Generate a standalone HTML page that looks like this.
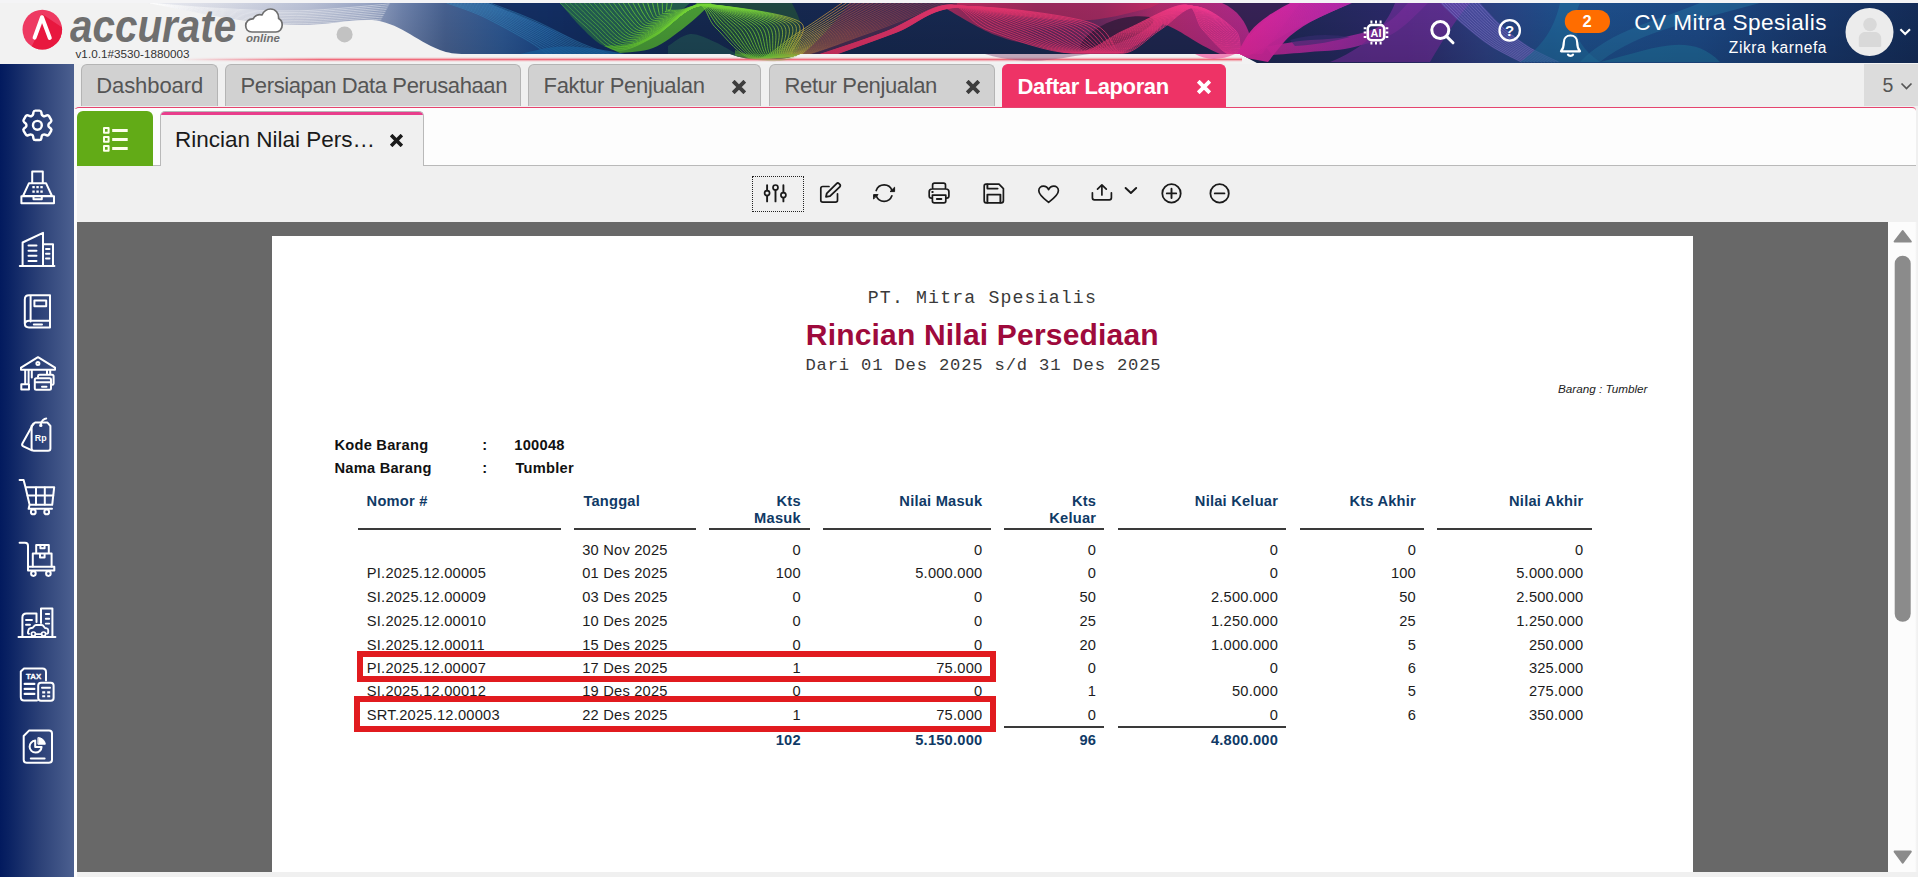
<!DOCTYPE html>
<html lang="id">
<head>
<meta charset="utf-8">
<title>Accurate Online - Rincian Nilai Persediaan</title>
<style>
*{box-sizing:border-box;margin:0;padding:0}
html,body{width:1918px;height:877px;overflow:hidden;background:#f0f0f0;font-family:"Liberation Sans",sans-serif;}
body{position:relative}
.abs{position:absolute}
/* header */
#hdr{position:absolute;left:0;top:0;width:1918px;height:64px;background:#f2f2f2;overflow:hidden}
#hdr svg.bg{position:absolute;left:0;top:0}
#logo-text{position:absolute;left:70px;top:-.5px;font-size:45.5px;font-weight:bold;font-style:italic;color:#6f6f6f;line-height:54px;transform-origin:0 0;transform:scaleX(.888);letter-spacing:0px;white-space:nowrap}
#online{position:absolute;left:246px;top:31px;font-size:11.5px;font-weight:bold;font-style:italic;color:#6f6f6f;line-height:14px;white-space:nowrap}
#ver{position:absolute;left:75.5px;top:47px;font-size:11.7px;color:#333;line-height:14px;white-space:nowrap;letter-spacing:.02px}
#company{position:absolute;right:91px;top:7.5px;font-size:22.6px;letter-spacing:.45px;color:#fff;line-height:30px;white-space:nowrap}
#user{position:absolute;right:91px;top:37.5px;font-size:15.6px;letter-spacing:.55px;color:#fff;line-height:20px;white-space:nowrap}
/* sidebar */
#side{position:absolute;left:0;top:64px;width:74px;height:813px;background:linear-gradient(90deg,#021a5e 0%,#0a2263 12%,#2d4278 55%,#4c6090 100%)}
#side svg{position:absolute;left:17px;width:40px;height:40px;fill:none;stroke:#fff;stroke-width:2;stroke-linecap:round;stroke-linejoin:round}
/* tabs row 1 */
#tabs{position:absolute;left:74px;top:64px;width:1844px;height:43px;background:#f0f0f0}
.tab{position:absolute;top:0;height:42px;background:#d1d1d1;border:1px solid #b4b4b4;border-bottom:none;border-radius:6px 6px 0 0;color:#555;font-size:22px;line-height:41px;white-space:nowrap}
.tab span{position:absolute;top:0}
.tab.act{background:#ee3366;border-color:#ee3366;color:#fff;font-weight:bold;height:43px;line-height:43px}
.x{position:absolute}
#tabcount{position:absolute;left:1864px;top:63.500px;width:54px;height:42px;background:#dcdcdc;color:#555;font-size:19.500px;line-height:43px}
/* row 2 */
#row2{position:absolute;left:74px;top:107px;width:1842px;height:59px;background:#fdfdfd;border-top:1px solid #e5446e;border-radius:5px 4px 0 0;border-bottom:1px solid #b9b9b9}
#gbtn{position:absolute;left:77.400px;top:111.300px;width:76px;height:54.700px;background:#62ab17;border-radius:6px 6px 0 0}
#rtab{position:absolute;left:160px;top:111px;width:264px;height:55px;background:#f0f0f0;border:1px solid #b9b9b9;border-bottom:none;border-radius:5px 5px 0 0;overflow:hidden}
#rtab:before{content:"";position:absolute;left:-1px;top:-1px;right:-1px;height:4px;background:#e83e8c}
#rtab span{position:absolute;left:14px;top:13.300px;font-size:22.5px;color:#1a1a1a;line-height:30px;white-space:nowrap}
/* toolbar */
#tool{position:absolute;left:77px;top:166px;width:1841px;height:56px;background:#f0f0f0}
#tool svg{position:absolute;top:15px;width:26px;height:26px;fill:none;stroke:#1a1a1a;stroke-width:1.7;stroke-linecap:round;stroke-linejoin:round}
/* viewer */
#view{position:absolute;left:77px;top:222px;width:1811px;height:650px;background:#686868;overflow:hidden}
#page{position:absolute;left:195px;top:14px;width:1421px;height:700px;background:#fff}
#sb{position:absolute;left:1888px;top:222px;width:30px;height:650px;background:linear-gradient(90deg,#fcfcfc 0,#fcfcfc 27px,#f1f1f1 29px)}
#bot{position:absolute;left:77px;top:872px;width:1841px;height:5px;background:#f0f0f0}
#gap{position:absolute;left:74px;top:109px;width:3.300px;height:768px;background:#fdfdfd}
/* report */
#page div{position:absolute;white-space:nowrap;line-height:16px}
.m{font-family:"Liberation Mono",monospace;color:#3a3a3a;font-size:18px}
.h{font-weight:bold;color:#103a66;font-size:14.67px;letter-spacing:.22px}
.b{font-weight:bold;color:#111;font-size:14.67px;letter-spacing:.25px}
.d{font-size:14.67px;color:#1c1c1c;letter-spacing:.22px}
.it{font-style:italic;font-size:11.7px;color:#1c1c1c}
.ttl{letter-spacing:.19px;font-weight:bold;font-size:30px;color:#9e0a3c;line-height:36px !important}
.ln{height:2px;background:#3a3a3a}
.rb{border:6px solid #e11b1f;background:#fff}
</style>
</head>
<body>
<div id="hdr">
<svg class="bg" width="1918" height="64" viewBox="0 0 1918 64"><defs>
<linearGradient id="bg" gradientUnits="userSpaceOnUse" x1="0" y1="0" x2="1918" y2="0">
<stop offset="0" stop-color="#f2f2f2"/><stop offset=".078" stop-color="#ebecf1"/><stop offset=".115" stop-color="#d6d9e4"/><stop offset=".16" stop-color="#b8bfd4"/><stop offset=".19" stop-color="#9aa6c4"/>
<stop offset=".21" stop-color="#6c80a9"/><stop offset=".232" stop-color="#46608f"/><stop offset=".262" stop-color="#2c5690"/>
<stop offset=".285" stop-color="#1a4585"/><stop offset=".305" stop-color="#122f63"/><stop offset=".36" stop-color="#14284f"/>
<stop offset=".65" stop-color="#1a2850"/><stop offset=".73" stop-color="#2b2868"/><stop offset=".775" stop-color="#2c3f80"/>
<stop offset=".815" stop-color="#1d4f8a"/><stop offset=".885" stop-color="#1c4884"/><stop offset=".94" stop-color="#18386c"/><stop offset="1" stop-color="#142c58"/>
</linearGradient>
<linearGradient id="gv" x1="0" y1="0" x2="0" y2="1"><stop offset="0" stop-color="#000" stop-opacity=".0"/><stop offset="1" stop-color="#000" stop-opacity=".12"/></linearGradient>
<linearGradient id="pk" gradientUnits="userSpaceOnUse" x1="940" y1="0" x2="1260" y2="0"><stop offset="0" stop-color="#c02a5e"/><stop offset=".3" stop-color="#6e2658"/><stop offset=".5" stop-color="#7a2860"/><stop offset=".68" stop-color="#d02a70"/><stop offset="1" stop-color="#d0289a"/></linearGradient>
<linearGradient id="mg" gradientUnits="userSpaceOnUse" x1="1240" y1="0" x2="1420" y2="0"><stop offset="0" stop-color="#e0269b"/><stop offset=".55" stop-color="#b428a8"/><stop offset="1" stop-color="#7a2c9c"/></linearGradient>
<linearGradient id="og" gradientUnits="userSpaceOnUse" x1="780" y1="0" x2="900" y2="0"><stop offset="0" stop-color="#c8a040"/><stop offset=".5" stop-color="#b85a38"/><stop offset="1" stop-color="#a03058" stop-opacity=".3"/></linearGradient>
<linearGradient id="gl" gradientUnits="userSpaceOnUse" x1="560" y1="0" x2="960" y2="0"><stop offset="0" stop-color="#3f9a4a"/><stop offset=".2" stop-color="#6fd432"/><stop offset=".52" stop-color="#7ad43a"/><stop offset=".6" stop-color="#c8b040"/><stop offset=".72" stop-color="#d07a48"/><stop offset="1" stop-color="#c04060" stop-opacity=".4"/></linearGradient>
<linearGradient id="pl" gradientUnits="userSpaceOnUse" x1="820" y1="0" x2="1400" y2="0"><stop offset="0" stop-color="#d23060"/><stop offset=".55" stop-color="#f03878"/><stop offset=".75" stop-color="#f038a0"/><stop offset="1" stop-color="#c030c0"/></linearGradient>
<clipPath id="bc"><path d="M0,3H1918V63H1257L1240,54H0Z"/></clipPath>
<clipPath id="bc2"><path d="M0,3H1918V63H1257L1240,54H800C780,62 750,62 730,54H0Z"/></clipPath>
</defs>
<g clip-path="url(#bc2)">
<rect x="0" y="3" width="1918" height="60" fill="url(#bg)"/>
<path d="M150.0,3.0C161.6,3.9 194.8,7.2 219.8,8.4C244.7,9.7 271.2,11.6 299.5,10.8C327.8,10.1 374.5,5.1 389.5,3.9M150.0,3.1C161.5,4.2 194.5,7.8 219.2,9.3C244.0,10.9 270.3,13.0 298.5,12.4C326.7,11.8 373.5,6.9 388.5,5.8M150.0,3.2C161.5,4.4 194.2,8.5 218.8,10.2C243.3,12.0 269.4,14.4 297.5,14.0C325.6,13.6 372.5,8.8 387.5,7.8M150.0,3.4C161.4,4.7 193.8,9.1 218.2,11.1C242.7,13.2 268.5,15.8 296.5,15.6C324.5,15.3 371.5,10.6 386.5,9.6M150.0,3.5C161.3,4.9 193.5,9.8 217.8,12.1C242.0,14.3 267.5,17.3 295.5,17.2C323.5,17.1 370.5,12.5 385.5,11.6M150.0,3.5C161.2,5.1 193.2,10.4 217.2,13.0C241.3,15.5 266.6,18.7 294.5,18.8C322.4,18.9 369.5,14.3 384.5,13.5M150.0,3.6C161.1,5.3 192.8,11.1 216.8,13.9C240.7,16.6 265.7,20.2 293.5,20.4C321.3,20.7 368.5,16.2 383.5,15.4M150.0,3.8C161.0,5.6 192.5,11.7 216.2,14.8C240.0,17.8 264.8,21.6 292.5,22.0C320.2,22.4 367.5,18.0 382.5,17.2M150.0,3.9C161.0,5.8 192.2,12.4 215.8,15.6C239.3,18.9 263.9,23.0 291.5,23.6C319.1,24.2 366.5,19.9 381.5,19.1M150.0,4.0C160.9,6.0 191.8,13.0 215.2,16.5C238.7,20.1 263.0,24.4 290.5,25.2C318.0,25.9 365.5,21.7 380.5,21.0" fill="none" stroke="#ffffff" stroke-opacity="0.5" stroke-width="0.9"/>
<path d="M488,3H640L600,54C580,40 530,20 488,3Z" fill="#122b5e" fill-opacity=".9"/>
<path d="M445.0,3.0C450.8,5.2 466.7,9.8 480.0,16.0C493.3,22.2 514.2,33.7 525.0,40.0C535.8,46.3 541.7,51.7 545.0,54.0L612.0,54.0C606.7,52.0 592.8,47.7 580.0,42.0C567.2,36.3 549.7,26.5 535.0,20.0C520.3,13.5 499.2,5.8 492.0,3.0Z" fill="#2270aa" fill-opacity="0.18" />
<path d="M446.7,3.0C452.6,5.2 468.6,10.0 482.0,16.1C495.3,22.3 516.1,33.8 527.0,40.1C537.9,46.4 544.0,51.7 547.4,54.0M450.0,3.0C456.0,5.2 472.4,10.2 485.9,16.4C499.4,22.6 519.8,34.0 530.9,40.2C541.9,46.5 548.6,51.7 552.2,54.0M453.4,3.0C459.5,5.3 476.2,10.5 489.8,16.7C503.4,22.9 523.6,34.1 534.8,40.4C546.0,46.6 553.3,51.7 557.0,54.0M456.8,3.0C462.9,5.3 480.1,10.8 493.8,17.0C507.4,23.2 527.4,34.3 538.8,40.5C550.1,46.7 557.9,51.8 561.8,54.0M460.1,3.0C466.4,5.4 483.9,11.0 497.7,17.3C511.4,23.6 531.2,34.5 542.7,40.6C554.2,46.8 562.6,51.8 566.5,54.0M463.5,3.0C469.8,5.4 487.8,11.3 501.6,17.6C515.5,23.9 535.0,34.7 546.6,40.8C558.2,46.9 567.2,51.8 571.3,54.0M466.8,3.0C473.3,5.5 491.6,11.5 505.5,17.9C519.5,24.2 538.8,34.9 550.5,40.9C562.3,47.0 571.8,51.8 576.1,54.0M470.2,3.0C476.7,5.5 495.4,11.8 509.5,18.1C523.5,24.5 542.6,35.1 554.5,41.1C566.4,47.0 576.5,51.8 580.9,54.0M473.5,3.0C480.2,5.6 499.2,12.1 513.4,18.4C527.5,24.8 546.3,35.3 558.4,41.2C570.4,47.1 581.1,51.9 585.7,54.0M476.9,3.0C483.6,5.6 503.1,12.3 517.3,18.7C531.6,25.1 550.1,35.5 562.3,41.4C574.5,47.2 585.8,51.9 590.5,54.0M480.2,3.0C487.1,5.7 506.9,12.6 521.2,19.0C535.6,25.4 553.9,35.7 566.2,41.5C578.6,47.3 590.4,51.9 595.2,54.0M483.6,3.0C490.5,5.7 510.8,12.8 525.2,19.3C539.6,25.7 557.7,35.9 570.2,41.6C582.7,47.4 595.1,51.9 600.0,54.0M487.0,3.0C494.0,5.8 514.6,13.1 529.1,19.6C543.6,26.0 561.5,36.0 574.1,41.8C586.7,47.5 599.7,52.0 604.8,54.0M490.3,3.0C497.4,5.8 518.4,13.4 533.0,19.9C547.7,26.3 565.3,36.2 578.0,41.9C590.8,47.6 604.3,52.0 609.6,54.0" fill="none" stroke="#48aede" stroke-opacity="0.42" stroke-width="0.7"/>
<path d="M520.0,54.0C525.8,52.8 543.3,48.0 555.0,47.0C566.7,46.0 578.3,46.8 590.0,48.0C601.7,49.2 619.2,53.0 625.0,54.0L625.0,56.0C619.2,56.0 601.7,56.0 590.0,56.0C578.3,56.0 566.7,56.0 555.0,56.0C543.3,56.0 525.8,56.0 520.0,56.0Z" fill="#1d68aa" fill-opacity="0.75" />
<path d="M560.0,3.0C563.3,6.8 573.3,19.2 580.0,26.0C586.7,32.8 593.7,40.0 600.0,44.0C606.3,48.0 615.0,49.0 618.0,50.0L650.0,40.0C653.0,37.3 663.0,28.7 668.0,24.0C673.0,19.3 676.3,15.5 680.0,12.0C683.7,8.5 688.3,4.5 690.0,3.0Z" fill="#2a704a" fill-opacity="0.7" />
<path d="M700.0,3.0C702.5,6.2 709.0,15.2 715.0,22.0C721.0,28.8 729.3,37.7 736.0,44.0C742.7,50.3 751.8,57.3 755.0,60.0L790.0,60.0C791.7,57.3 798.3,50.3 800.0,44.0C801.7,37.7 801.3,28.8 800.0,22.0C798.7,15.2 793.3,6.2 792.0,3.0Z" fill="#23523a" fill-opacity="0.7" />
<path d="M668.0,46.0C671.7,44.0 682.2,34.7 690.0,34.0C697.8,33.3 706.7,38.3 715.0,42.0C723.3,45.7 735.8,53.7 740.0,56.0L740.0,58.0C735.8,57.7 723.3,56.7 715.0,56.0C706.7,55.3 697.8,54.3 690.0,54.0C682.2,53.7 671.7,54.0 668.0,54.0Z" fill="#1f4d55" fill-opacity="0.8" />
<path d="M604.0,46.0C609.3,45.5 625.3,46.5 636.0,43.0C646.7,39.5 657.8,31.7 668.0,25.0C678.2,18.3 692.2,6.7 697.0,3.0L712.0,3.0C707.5,7.0 694.8,19.5 685.0,27.0C675.2,34.5 663.8,43.7 653.0,48.0C642.2,52.3 625.5,52.2 620.0,53.0Z" fill="#55b52e" fill-opacity="0.8" />
<path d="M735.0,50.0C737.8,51.0 745.3,54.3 752.0,56.0C758.7,57.7 767.0,60.3 775.0,60.0C783.0,59.7 795.8,55.0 800.0,54.0L800.0,62.0C795.8,62.0 783.0,62.0 775.0,62.0C767.0,62.0 758.7,62.0 752.0,62.0C745.3,62.0 737.8,62.0 735.0,62.0Z" fill="#62b834" fill-opacity="0.55" />
<path d="M560.0,3.0C564.2,6.8 575.7,18.2 585.0,26.0C594.3,33.8 604.3,48.3 616.0,50.0C627.7,51.7 641.5,43.5 655.0,36.0C668.5,28.5 686.8,6.3 697.0,5.0C707.2,3.7 706.5,19.0 716.0,28.0C725.5,37.0 740.7,58.0 754.0,59.0C767.3,60.0 781.3,43.3 796.0,34.0C810.7,24.7 834.3,8.2 842.0,3.0M564.9,3.0C568.8,6.7 579.8,17.8 588.7,25.3C597.6,32.8 607.0,46.7 618.3,48.3C629.5,49.9 642.8,42.1 656.1,34.9C669.3,27.7 687.1,6.2 697.7,5.0C708.3,3.8 710.0,18.8 719.7,27.7C729.3,36.7 742.5,57.8 755.7,58.9C769.0,59.9 783.9,43.3 799.0,34.0C814.2,24.7 838.6,8.2 846.5,3.0M569.7,3.0C573.5,6.6 583.9,17.4 592.4,24.6C600.9,31.9 609.7,45.0 620.5,46.5C631.3,48.0 644.2,40.7 657.2,33.7C670.2,26.8 687.4,6.0 698.4,5.0C709.4,4.0 713.5,18.5 723.3,27.5C733.2,36.4 744.3,57.7 757.5,58.7C770.6,59.8 786.5,43.3 802.1,34.0C817.7,24.7 842.8,8.2 851.0,3.0M574.6,3.0C578.2,6.5 588.1,16.9 596.1,23.9C604.1,30.9 612.4,43.3 622.8,44.8C633.1,46.2 645.5,39.2 658.3,32.6C671.0,26.0 687.6,5.9 699.1,5.0C710.5,4.1 716.9,18.3 727.0,27.2C737.0,36.2 746.2,57.5 759.2,58.6C772.2,59.7 789.1,43.3 805.1,34.0C821.2,24.7 847.1,8.2 855.4,3.0M579.5,3.0C582.9,6.4 592.2,16.5 599.8,23.2C607.4,29.9 615.1,41.7 625.0,43.0C635.0,44.4 646.9,37.8 659.3,31.5C671.8,25.1 687.9,5.8 699.8,5.0C711.7,4.2 720.4,18.0 730.6,27.0C740.8,35.9 748.0,57.3 761.0,58.5C773.9,59.7 791.7,43.2 808.2,34.0C824.7,24.8 851.3,8.2 859.9,3.0M584.3,3.0C587.5,6.3 596.3,16.1 603.5,22.5C610.6,28.9 617.8,40.0 627.3,41.3C636.8,42.6 648.2,36.4 660.4,30.3C672.6,24.3 688.2,5.6 700.5,5.0C712.8,4.4 723.9,17.8 734.3,26.7C744.6,35.6 749.9,57.1 762.7,58.3C775.5,59.6 794.3,43.2 811.2,34.0C828.2,24.8 855.5,8.2 864.4,3.0M589.2,3.0C592.2,6.1 600.4,15.7 607.2,21.8C613.9,27.9 620.5,38.3 629.6,39.6C638.6,40.8 649.6,35.0 661.5,29.2C673.5,23.5 688.4,5.5 701.2,5.0C713.9,4.5 727.4,17.6 737.9,26.4C748.5,35.3 751.7,57.0 764.4,58.2C777.2,59.5 796.9,43.2 814.3,34.0C831.7,24.8 859.8,8.2 868.9,3.0M594.1,3.0C596.9,6.0 604.6,15.3 610.9,21.1C617.2,26.9 623.2,36.7 631.8,37.8C640.4,39.0 650.9,33.6 662.6,28.1C674.3,22.6 688.7,5.3 701.9,5.0C715.0,4.7 730.8,17.3 741.6,26.2C752.3,35.0 753.6,56.8 766.2,58.1C778.8,59.4 799.4,43.2 817.3,34.0C835.2,24.8 864.0,8.2 873.3,3.0M599.0,3.0C601.6,5.9 608.7,14.9 614.6,20.4C620.4,25.9 625.9,35.0 634.1,36.1C642.3,37.2 652.3,32.1 663.7,27.0C675.1,21.8 689.0,5.2 702.6,5.0C716.2,4.8 734.3,17.1 745.2,25.9C756.1,34.7 755.4,56.6 767.9,58.0C780.4,59.3 802.0,43.2 820.3,34.0C838.7,24.8 868.2,8.2 877.8,3.0M603.8,3.0C606.2,5.8 612.8,14.5 618.3,19.7C623.7,25.0 628.6,33.3 636.3,34.3C644.1,35.4 653.6,30.7 664.8,25.8C675.9,20.9 689.2,5.0 703.3,5.0C717.3,5.0 737.8,16.8 748.9,25.7C759.9,34.5 757.2,56.4 769.7,57.8C782.1,59.2 804.6,43.1 823.4,34.0C842.2,24.9 872.5,8.2 882.3,3.0M608.7,3.0C610.9,5.7 617.0,14.1 622.0,19.0C626.9,24.0 631.3,31.7 638.6,32.6C645.9,33.6 655.0,29.3 665.9,24.7C676.8,20.1 689.5,4.9 704.0,5.0C718.4,5.1 741.3,16.6 752.5,25.4C763.8,34.2 759.1,56.3 771.4,57.7C783.7,59.1 807.2,43.1 826.4,34.0C845.7,24.9 876.7,8.2 886.8,3.0M613.6,3.0C615.6,5.6 621.1,13.7 625.7,18.3C630.2,23.0 634.0,30.0 640.9,30.9C647.8,31.7 656.3,27.9 667.0,23.6C677.6,19.3 689.8,4.7 704.7,5.0C719.5,5.3 744.8,16.4 756.2,25.1C767.6,33.9 760.9,56.1 773.1,57.6C785.3,59.0 809.8,43.1 829.5,34.0C849.2,24.9 881.0,8.2 891.3,3.0M618.4,3.0C620.3,5.4 625.2,13.3 629.3,17.7C633.5,22.0 636.7,28.3 643.1,29.1C649.6,29.9 657.7,26.5 668.0,22.4C678.4,18.4 690.1,4.6 705.3,5.0C720.6,5.4 748.2,16.1 759.8,24.9C771.4,33.6 762.8,55.9 774.9,57.4C787.0,59.0 812.4,43.1 832.5,34.0C852.7,24.9 885.2,8.2 895.7,3.0M623.3,3.0C624.9,5.3 629.4,12.9 633.0,17.0C636.7,21.0 639.4,26.7 645.4,27.4C651.4,28.1 659.0,25.0 669.1,21.3C679.2,17.6 690.3,4.4 706.0,5.0C721.8,5.6 751.7,15.9 763.5,24.6C775.2,33.3 764.6,55.7 776.6,57.3C788.6,58.9 815.0,43.1 835.6,34.0C856.2,24.9 889.4,8.2 900.2,3.0M628.2,3.0C629.6,5.2 633.5,12.5 636.7,16.3C640.0,20.0 642.1,25.0 647.7,25.7C653.2,26.3 660.4,23.6 670.2,20.2C680.1,16.7 690.6,4.3 706.7,5.0C722.9,5.7 755.2,15.7 767.1,24.3C779.1,33.0 766.4,55.6 778.3,57.2C790.3,58.8 817.6,43.0 838.6,34.0C859.7,25.0 893.7,8.2 904.7,3.0M633.0,3.0C634.3,5.1 637.6,12.1 640.4,15.6C643.2,19.1 644.8,23.3 649.9,23.9C655.1,24.5 661.7,22.2 671.3,19.0C680.9,15.9 690.9,4.2 707.4,5.0C724.0,5.8 758.7,15.4 770.8,24.1C782.9,32.8 768.3,55.4 780.1,57.0C791.9,58.7 820.1,43.0 841.7,34.0C863.2,25.0 897.9,8.2 909.2,3.0M637.9,3.0C638.9,5.0 641.8,11.7 644.1,14.9C646.5,18.1 647.5,21.7 652.2,22.2C656.9,22.7 663.1,20.8 672.4,17.9C681.7,15.1 691.1,4.0 708.1,5.0C725.1,6.0 762.2,15.2 774.4,23.8C786.7,32.5 770.1,55.2 781.8,56.9C793.5,58.6 822.7,43.0 844.7,34.0C866.7,25.0 902.2,8.2 913.7,3.0M642.8,3.0C643.6,4.9 645.9,11.3 647.8,14.2C649.8,17.1 650.2,20.0 654.4,20.4C658.7,20.9 664.4,19.4 673.5,16.8C682.5,14.2 691.4,3.9 708.8,5.0C726.3,6.1 765.6,14.9 778.1,23.6C790.5,32.2 772.0,55.0 783.6,56.8C795.2,58.5 825.3,43.0 847.7,34.0C870.2,25.0 906.4,8.2 918.1,3.0M647.7,3.0C648.3,4.7 650.0,10.9 651.5,13.5C653.0,16.1 652.9,18.3 656.7,18.7C660.5,19.1 665.8,17.9 674.6,15.7C683.4,13.4 691.7,3.7 709.5,5.0C727.4,6.3 769.1,14.7 781.7,23.3C794.4,31.9 773.8,54.9 785.3,56.7C796.8,58.4 827.9,42.9 850.8,34.0C873.7,25.1 910.6,8.2 922.6,3.0M652.5,3.0C653.0,4.6 654.1,10.5 655.2,12.8C656.3,15.1 655.6,16.7 659.0,17.0C662.4,17.2 667.1,16.5 675.7,14.5C684.2,12.5 691.9,3.6 710.2,5.0C728.5,6.4 772.6,14.5 785.4,23.0C798.2,31.6 775.6,54.7 787.0,56.5C798.4,58.3 830.5,42.9 853.8,34.0C877.2,25.1 914.9,8.2 927.1,3.0M657.4,3.0C657.6,4.5 658.3,10.1 658.9,12.1C659.6,14.1 658.2,15.0 661.2,15.2C664.2,15.4 668.5,15.1 676.7,13.4C685.0,11.7 692.2,3.4 710.9,5.0C729.6,6.6 776.1,14.2 789.0,22.8C802.0,31.3 777.5,54.5 788.8,56.4C800.1,58.3 833.1,42.9 856.9,34.0C880.7,25.1 919.1,8.2 931.6,3.0M662.3,3.0C662.3,4.4 662.4,9.6 662.6,11.4C662.8,13.1 660.9,13.3 663.5,13.5C666.0,13.6 669.8,13.7 677.8,12.3C685.8,10.8 692.5,3.3 711.6,5.0C730.8,6.7 779.5,14.0 792.7,22.5C805.8,31.1 779.3,54.3 790.5,56.3C801.7,58.2 835.7,42.9 859.9,34.0C884.2,25.1 923.4,8.2 936.0,3.0M667.1,3.0C667.0,4.3 666.5,9.2 666.3,10.7C666.1,12.2 663.6,11.7 665.7,11.7C667.8,11.8 671.2,12.3 678.9,11.1C686.7,10.0 692.7,3.1 712.3,5.0C731.9,6.9 783.0,13.7 796.3,22.3C809.7,30.8 781.2,54.2 792.3,56.1C803.4,58.1 838.2,42.9 863.0,34.0C887.7,25.1 927.6,8.2 940.5,3.0M672.0,3.0C671.7,4.2 670.7,8.8 670.0,10.0C669.3,11.2 666.3,10.0 668.0,10.0C669.7,10.0 672.5,10.8 680.0,10.0C687.5,9.2 693.0,3.0 713.0,5.0C733.0,7.0 786.5,13.5 800.0,22.0C813.5,30.5 783.0,54.0 794.0,56.0C805.0,58.0 840.8,42.8 866.0,34.0C891.2,25.2 931.8,8.2 945.0,3.0" fill="none" stroke="url(#gl)" stroke-opacity="0.85" stroke-width="0.9"/>
<path d="M850,3H957C925,14 895,30 860,44C845,50 830,54 800,56C820,40 835,22 850,3Z" fill="#6a3052" fill-opacity=".55"/>
<path d="M945.0,6.0C947.5,5.5 950.8,3.5 960.0,3.0C969.2,2.5 976.7,3.0 1000.0,3.0C1023.3,3.0 1070.0,3.0 1100.0,3.0C1130.0,3.0 1155.0,3.0 1180.0,3.0C1205.0,3.0 1230.0,3.0 1250.0,3.0C1270.0,3.0 1291.7,3.0 1300.0,3.0L1262.0,54.0C1260.0,54.0 1263.7,54.0 1250.0,54.0C1236.3,54.0 1208.3,54.0 1180.0,54.0C1151.7,54.0 1102.5,55.0 1080.0,54.0C1057.5,53.0 1059.2,51.2 1045.0,48.0C1030.8,44.8 1011.7,41.7 995.0,35.0C978.3,28.3 953.3,12.5 945.0,8.0Z" fill="url(#pk)" fill-opacity="0.8" />
<path d="M957.0,3.0C967.5,3.0 997.8,3.0 1020.0,3.0C1042.2,3.0 1066.7,3.0 1090.0,3.0C1113.3,3.0 1148.3,3.0 1160.0,3.0L1150.0,8.0C1140.0,10.0 1111.7,18.7 1090.0,20.0C1068.3,21.3 1042.2,18.5 1020.0,16.0C997.8,13.5 967.5,6.8 957.0,5.0Z" fill="#d02a5e" fill-opacity="0.5" />
<path d="M1082,42C1095,24 1125,13 1150,17C1156,19 1154,24 1146,29C1130,40 1105,50 1084,51C1079,49 1079,46 1082,42Z" fill="#3a1c40" fill-opacity=".9"/>
<path d="M1163,24C1178,28 1196,44 1220,54L1118,54C1135,48 1150,38 1163,24Z" fill="#18264e" fill-opacity=".96"/>
<path d="M1222,3H1292C1276,10 1262,20 1250,36C1246,22 1238,10 1222,3Z" fill="#2b2250" fill-opacity=".92"/>
<path d="M818.0,55.0C829.2,51.2 863.3,40.3 885.0,32.0C906.7,23.7 930.8,5.3 948.0,5.0C965.2,4.7 967.3,22.0 988.0,30.0C1008.7,38.0 1049.2,53.0 1072.0,53.0C1094.8,53.0 1106.3,38.0 1125.0,30.0C1143.7,22.0 1171.0,5.0 1184.0,5.0C1197.0,5.0 1195.0,21.7 1203.0,30.0C1211.0,38.3 1223.2,55.0 1232.0,55.0C1240.8,55.0 1246.0,38.7 1256.0,30.0C1266.0,21.3 1286.0,7.5 1292.0,3.0M818.8,55.0C829.9,51.2 863.9,40.3 885.6,32.0C907.2,23.7 930.7,5.5 948.6,5.1C966.4,4.7 971.8,21.6 992.8,29.6C1013.7,37.6 1052.1,52.9 1074.4,53.0C1096.7,53.1 1108.3,38.0 1126.7,30.0C1145.0,22.0 1171.6,5.1 1184.6,5.1C1197.5,5.1 1196.5,21.7 1204.5,30.0C1212.5,38.3 1223.8,55.0 1232.7,55.0C1241.5,55.0 1247.4,38.7 1257.7,30.0C1268.1,21.3 1288.6,7.5 1294.8,3.0M819.5,55.0C830.6,51.2 864.5,40.3 886.1,32.0C907.7,23.7 930.6,5.7 949.1,5.2C967.7,4.7 976.3,21.3 997.5,29.2C1018.8,37.2 1055.0,52.9 1076.8,53.0C1098.6,53.1 1110.3,38.0 1128.3,30.0C1146.4,22.0 1172.2,5.2 1185.1,5.2C1198.1,5.2 1198.0,21.7 1206.0,30.0C1214.1,38.3 1224.4,55.0 1233.3,55.0C1242.2,55.0 1248.7,38.7 1259.4,30.0C1270.1,21.3 1291.2,7.5 1297.5,3.0M820.3,55.0C831.4,51.2 865.1,40.3 886.7,32.0C908.3,23.7 930.5,5.8 949.7,5.3C969.0,4.8 980.7,20.9 1002.3,28.9C1023.9,36.8 1057.9,52.8 1079.1,53.0C1100.4,53.2 1112.2,38.0 1130.0,30.0C1147.8,22.0 1172.8,5.3 1185.7,5.3C1198.6,5.3 1199.5,21.7 1207.6,30.0C1215.6,38.3 1225.1,55.0 1234.0,55.0C1242.9,55.0 1250.1,38.7 1261.1,30.0C1272.2,21.3 1293.8,7.5 1300.3,3.0M821.0,55.0C832.1,51.2 865.7,40.3 887.3,32.0C908.8,23.7 930.3,6.0 950.3,5.4C970.2,4.8 985.2,20.5 1007.0,28.5C1028.9,36.4 1060.8,52.7 1081.5,53.0C1102.3,53.3 1114.2,37.9 1131.7,30.0C1149.1,22.1 1173.4,5.4 1186.3,5.4C1199.2,5.4 1201.0,21.7 1209.1,30.0C1217.2,38.3 1225.7,55.0 1234.7,55.0C1243.6,55.0 1251.5,38.7 1262.9,30.0C1274.3,21.3 1296.3,7.5 1303.0,3.0M821.8,55.0C832.8,51.2 866.3,40.3 887.9,32.0C909.4,23.7 930.2,6.1 950.9,5.5C971.5,4.8 989.6,20.2 1011.8,28.1C1034.0,36.0 1063.7,52.7 1083.9,53.0C1104.2,53.3 1116.2,37.9 1133.3,30.0C1150.5,22.1 1174.0,5.5 1186.9,5.5C1199.7,5.5 1202.5,21.7 1210.6,30.0C1218.7,38.3 1226.3,55.0 1235.3,55.0C1244.3,55.0 1252.8,38.7 1264.6,30.0C1276.3,21.3 1298.9,7.5 1305.8,3.0M822.6,55.0C833.5,51.2 867.0,40.2 888.4,32.0C909.9,23.8 930.1,6.3 951.4,5.6C972.8,4.9 994.1,19.8 1016.6,27.7C1039.0,35.6 1066.5,52.6 1086.3,53.0C1106.0,53.4 1118.1,37.9 1135.0,30.0C1151.9,22.1 1174.6,5.6 1187.4,5.6C1200.3,5.6 1204.0,21.8 1212.1,30.0C1220.2,38.2 1227.0,55.0 1236.0,55.0C1245.0,55.0 1254.2,38.7 1266.3,30.0C1278.4,21.3 1301.5,7.5 1308.6,3.0M823.3,55.0C834.3,51.2 867.6,40.2 889.0,32.0C910.4,23.8 929.9,6.4 952.0,5.7C974.1,4.9 998.6,19.4 1021.3,27.3C1044.1,35.2 1069.4,52.6 1088.7,53.0C1107.9,53.4 1120.1,37.9 1136.7,30.0C1153.2,22.1 1175.2,5.7 1188.0,5.7C1200.8,5.7 1205.6,21.8 1213.7,30.0C1221.8,38.2 1227.6,55.0 1236.7,55.0C1245.7,55.0 1255.6,38.7 1268.0,30.0C1280.4,21.3 1304.1,7.5 1311.3,3.0M824.1,55.0C835.0,51.2 868.2,40.2 889.6,32.0C911.0,23.8 929.8,6.6 952.6,5.8C975.3,4.9 1003.0,19.1 1026.1,27.0C1049.2,34.8 1072.3,52.5 1091.0,53.0C1109.8,53.5 1122.1,37.9 1138.3,30.0C1154.6,22.1 1175.8,5.8 1188.6,5.8C1201.4,5.8 1207.1,21.8 1215.2,30.0C1223.3,38.2 1228.2,55.0 1237.3,55.0C1246.4,55.0 1256.9,38.7 1269.7,30.0C1282.5,21.3 1306.7,7.5 1314.1,3.0M824.9,55.0C835.7,51.2 868.8,40.2 890.1,32.0C911.5,23.8 929.7,6.8 953.1,5.9C976.6,5.0 1007.5,18.7 1030.9,26.6C1054.2,34.4 1075.2,52.4 1093.4,53.0C1111.6,53.6 1124.0,37.9 1140.0,30.0C1156.0,22.1 1176.4,5.9 1189.1,5.9C1201.9,5.9 1208.6,21.8 1216.7,30.0C1224.9,38.2 1228.9,55.0 1238.0,55.0C1247.1,55.0 1258.3,38.7 1271.4,30.0C1284.6,21.3 1309.3,7.5 1316.9,3.0M825.6,55.0C836.5,51.2 869.4,40.2 890.7,32.0C912.1,23.8 929.6,6.9 953.7,6.0C977.9,5.0 1011.9,18.3 1035.6,26.2C1059.3,34.0 1078.1,52.4 1095.8,53.0C1113.5,53.6 1126.0,37.8 1141.7,30.0C1157.3,22.2 1177.0,6.0 1189.7,6.0C1202.5,6.0 1210.1,21.8 1218.2,30.0C1226.4,38.2 1229.5,55.0 1238.7,55.0C1247.8,55.0 1259.7,38.7 1273.1,30.0C1286.6,21.3 1311.9,7.5 1319.6,3.0M826.4,55.0C837.2,51.2 870.0,40.2 891.3,32.0C912.6,23.8 929.4,7.1 954.3,6.0C979.1,5.0 1016.4,18.0 1040.4,25.8C1064.4,33.6 1081.0,52.3 1098.2,53.0C1115.3,53.7 1128.0,37.8 1143.3,30.0C1158.7,22.2 1177.5,6.0 1190.3,6.0C1203.0,6.0 1211.6,21.8 1219.8,30.0C1227.9,38.2 1230.2,55.0 1239.3,55.0C1248.5,55.0 1261.0,38.7 1274.9,30.0C1288.7,21.3 1314.5,7.5 1322.4,3.0M827.1,55.0C837.9,51.2 870.6,40.1 891.9,32.0C913.1,23.9 929.3,7.2 954.9,6.1C980.4,5.0 1020.9,17.6 1045.1,25.4C1069.4,33.2 1083.9,52.2 1100.6,53.0C1117.2,53.8 1130.0,37.8 1145.0,30.0C1160.0,22.2 1178.1,6.1 1190.9,6.1C1203.6,6.1 1213.1,21.9 1221.3,30.0C1229.5,38.1 1230.8,55.0 1240.0,55.0C1249.2,55.0 1262.4,38.7 1276.6,30.0C1290.8,21.3 1317.0,7.5 1325.1,3.0M827.9,55.0C838.7,51.2 871.2,40.1 892.4,32.0C913.7,23.9 929.2,7.4 955.4,6.2C981.7,5.1 1025.3,17.3 1049.9,25.0C1074.5,32.8 1086.8,52.2 1103.0,53.0C1119.1,53.8 1131.9,37.8 1146.7,30.0C1161.4,22.2 1178.7,6.2 1191.4,6.2C1204.1,6.2 1214.6,21.9 1222.8,30.0C1231.0,38.1 1231.4,55.0 1240.7,55.0C1249.9,55.0 1263.7,38.7 1278.3,30.0C1292.8,21.3 1319.6,7.5 1327.9,3.0M828.7,55.0C839.4,51.2 871.8,40.1 893.0,32.0C914.2,23.9 929.1,7.6 956.0,6.3C982.9,5.1 1029.8,16.9 1054.7,24.7C1079.6,32.4 1089.7,52.1 1105.3,53.0C1120.9,53.9 1133.9,37.8 1148.3,30.0C1162.8,22.2 1179.3,6.3 1192.0,6.3C1204.7,6.3 1216.1,21.9 1224.3,30.0C1232.6,38.1 1232.1,55.0 1241.3,55.0C1250.6,55.0 1265.1,38.7 1280.0,30.0C1294.9,21.3 1322.2,7.5 1330.7,3.0M829.4,55.0C840.1,51.2 872.4,40.1 893.6,32.0C914.8,23.9 928.9,7.7 956.6,6.4C984.2,5.1 1034.2,16.5 1059.4,24.3C1084.6,32.0 1092.6,52.0 1107.7,53.0C1122.8,54.0 1135.9,37.8 1150.0,30.0C1164.1,22.2 1179.9,6.4 1192.6,6.4C1205.2,6.4 1217.6,21.9 1225.9,30.0C1234.1,38.1 1232.7,55.0 1242.0,55.0C1251.3,55.0 1266.5,38.7 1281.7,30.0C1297.0,21.3 1324.8,7.5 1333.4,3.0M830.2,55.0C840.8,51.2 873.0,40.1 894.1,32.0C915.3,23.9 928.8,7.9 957.1,6.5C985.5,5.2 1038.7,16.2 1064.2,23.9C1089.7,31.7 1095.5,52.0 1110.1,53.0C1124.7,54.0 1137.8,37.7 1151.7,30.0C1165.5,22.3 1180.5,6.5 1193.1,6.5C1205.8,6.5 1219.1,21.9 1227.4,30.0C1235.6,38.1 1233.3,55.0 1242.7,55.0C1252.0,55.0 1267.8,38.7 1283.4,30.0C1299.0,21.3 1327.4,7.5 1336.2,3.0M831.0,55.0C841.6,51.2 873.6,40.1 894.7,32.0C915.8,23.9 928.7,8.0 957.7,6.6C986.8,5.2 1043.2,15.8 1069.0,23.5C1094.7,31.3 1098.4,51.9 1112.5,53.0C1126.5,54.1 1139.8,37.7 1153.3,30.0C1166.9,22.3 1181.1,6.6 1193.7,6.6C1206.3,6.6 1220.6,21.9 1228.9,30.0C1237.2,38.1 1234.0,55.0 1243.3,55.0C1252.7,55.0 1269.2,38.7 1285.1,30.0C1301.1,21.3 1330.0,7.5 1339.0,3.0M831.7,55.0C842.3,51.2 874.2,40.0 895.3,32.0C916.4,24.0 928.5,8.2 958.3,6.7C988.0,5.2 1047.6,15.4 1073.7,23.1C1099.8,30.9 1101.3,51.9 1114.9,53.0C1128.4,54.1 1141.8,37.7 1155.0,30.0C1168.2,22.3 1181.7,6.7 1194.3,6.7C1206.9,6.7 1222.1,22.0 1230.4,30.0C1238.7,38.0 1234.6,55.0 1244.0,55.0C1253.4,55.0 1270.6,38.7 1286.9,30.0C1303.1,21.3 1332.6,7.5 1341.7,3.0M832.5,55.0C843.0,51.2 874.8,40.0 895.9,32.0C916.9,24.0 928.4,8.3 958.9,6.8C989.3,5.3 1052.1,15.1 1078.5,22.8C1104.9,30.5 1104.2,51.8 1117.2,53.0C1130.3,54.2 1143.7,37.7 1156.7,30.0C1169.6,22.3 1182.3,6.8 1194.9,6.8C1207.4,6.8 1223.7,22.0 1232.0,30.0C1240.3,38.0 1235.2,55.0 1244.7,55.0C1254.1,55.0 1271.9,38.7 1288.6,30.0C1305.2,21.3 1335.2,7.5 1344.5,3.0M833.2,55.0C843.8,51.2 875.4,40.0 896.4,32.0C917.5,24.0 928.3,8.5 959.4,6.9C990.6,5.3 1056.5,14.7 1083.2,22.4C1109.9,30.1 1107.1,51.7 1119.6,53.0C1132.1,54.3 1145.7,37.7 1158.3,30.0C1171.0,22.3 1182.9,6.9 1195.4,6.9C1208.0,6.9 1225.2,22.0 1233.5,30.0C1241.8,38.0 1235.9,55.0 1245.3,55.0C1254.8,55.0 1273.3,38.7 1290.3,30.0C1307.3,21.3 1337.7,7.5 1347.2,3.0M834.0,55.0C844.5,51.2 876.0,40.0 897.0,32.0C918.0,24.0 928.2,8.7 960.0,7.0C991.8,5.3 1061.0,14.3 1088.0,22.0C1115.0,29.7 1110.0,51.7 1122.0,53.0C1134.0,54.3 1147.7,37.7 1160.0,30.0C1172.3,22.3 1183.5,7.0 1196.0,7.0C1208.5,7.0 1226.7,22.0 1235.0,30.0C1243.3,38.0 1236.5,55.0 1246.0,55.0C1255.5,55.0 1274.7,38.7 1292.0,30.0C1309.3,21.3 1340.3,7.5 1350.0,3.0" fill="none" stroke="url(#pl)" stroke-opacity="0.8" stroke-width="1"/>
<path d="M1290.0,3.0C1286.3,5.2 1274.7,11.2 1268.0,16.0C1261.3,20.8 1255.3,25.3 1250.0,32.0C1244.7,38.7 1238.3,52.0 1236.0,56.0L1268.0,62.0C1271.7,57.7 1281.7,43.3 1290.0,36.0C1298.3,28.7 1307.7,23.5 1318.0,18.0C1328.3,12.5 1346.3,5.5 1352.0,3.0Z" fill="url(#mg)" fill-opacity="0.95" />
<path d="M1266.0,47.0C1271.7,46.0 1286.8,42.7 1300.0,41.0C1313.2,39.3 1330.8,39.8 1345.0,37.0C1359.2,34.2 1374.5,29.7 1385.0,24.0C1395.5,18.3 1404.2,6.5 1408.0,3.0L1428.0,3.0C1422.3,8.0 1407.0,25.5 1394.0,33.0C1381.0,40.5 1364.0,44.8 1350.0,48.0C1336.0,51.2 1323.0,50.8 1310.0,52.0C1297.0,53.2 1278.3,54.5 1272.0,55.0Z" fill="url(#mg)" fill-opacity="0.8" />
<path d="M1290,40C1310,34 1330,34 1350,37C1335,41 1315,45 1295,46Z" fill="#3a2f78" fill-opacity=".6"/>
<path d="M1395,3H1470C1455,20 1440,45 1430,62H1330C1360,50 1385,30 1395,3Z" fill="#6b2d96" fill-opacity=".75"/>
<path d="M1440.0,3.0C1443.7,6.5 1453.7,16.8 1462.0,24.0C1470.3,31.2 1480.3,39.7 1490.0,46.0C1499.7,52.3 1515.0,59.3 1520.0,62.0L1560.0,62.0C1554.7,59.3 1538.0,52.3 1528.0,46.0C1518.0,39.7 1508.0,31.2 1500.0,24.0C1492.0,16.8 1483.3,6.5 1480.0,3.0Z" fill="#5a55b0" fill-opacity="0.6" />
<path d="M1441.7,3.0C1445.3,6.5 1455.3,16.8 1463.6,24.0C1471.9,31.2 1481.9,39.7 1491.6,46.0C1501.3,52.3 1516.7,59.3 1521.7,62.0M1445.0,3.0C1448.6,6.5 1458.5,16.8 1466.8,24.0C1475.0,31.2 1485.0,39.7 1494.8,46.0C1504.5,52.3 1520.0,59.3 1525.0,62.0M1448.3,3.0C1451.9,6.5 1461.7,16.8 1469.9,24.0C1478.2,31.2 1488.2,39.7 1497.9,46.0C1507.7,52.3 1523.3,59.3 1528.3,62.0M1451.7,3.0C1455.2,6.5 1464.8,16.8 1473.1,24.0C1481.3,31.2 1491.3,39.7 1501.1,46.0C1510.8,52.3 1526.6,59.3 1531.7,62.0M1455.0,3.0C1458.5,6.5 1468.0,16.8 1476.2,24.0C1484.5,31.2 1494.5,39.7 1504.2,46.0C1514.0,52.3 1529.9,59.3 1535.0,62.0M1458.3,3.0C1461.8,6.5 1471.2,16.8 1479.4,24.0C1487.6,31.2 1497.6,39.7 1507.4,46.0C1517.2,52.3 1533.2,59.3 1538.3,62.0M1461.7,3.0C1465.2,6.5 1474.4,16.8 1482.6,24.0C1490.7,31.2 1500.7,39.7 1510.6,46.0C1520.4,52.3 1536.5,59.3 1541.7,62.0M1465.0,3.0C1468.5,6.5 1477.6,16.8 1485.8,24.0C1493.9,31.2 1503.9,39.7 1513.8,46.0C1523.6,52.3 1539.8,59.3 1545.0,62.0M1468.3,3.0C1471.8,6.5 1480.8,16.8 1488.9,24.0C1497.0,31.2 1507.0,39.7 1516.9,46.0C1526.8,52.3 1543.1,59.3 1548.3,62.0M1471.7,3.0C1475.1,6.5 1484.0,16.8 1492.1,24.0C1500.2,31.2 1510.2,39.7 1520.1,46.0C1530.0,52.3 1546.4,59.3 1551.7,62.0M1475.0,3.0C1478.4,6.5 1487.2,16.8 1495.2,24.0C1503.3,31.2 1513.3,39.7 1523.2,46.0C1533.2,52.3 1549.7,59.3 1555.0,62.0M1478.3,3.0C1481.7,6.5 1490.4,16.8 1498.4,24.0C1506.4,31.2 1516.4,39.7 1526.4,46.0C1536.4,52.3 1553.0,59.3 1558.3,62.0" fill="none" stroke="#a99be8" stroke-opacity="0.45" stroke-width="0.7"/>
<path d="M1560,3C1555,25 1545,45 1520,62H1600C1575,45 1570,25 1580,3Z" fill="#1f6c9c" fill-opacity=".6"/>
<path d="M1600,62C1640,30 1700,20 1760,3H1700C1660,20 1610,30 1580,62Z" fill="#2577a5" fill-opacity=".45"/>
<path d="M1600,62C1650,50 1690,30 1720,62Z" fill="#1f7aa0" fill-opacity=".5"/>
<rect x="0" y="3" width="1918" height="60" fill="url(#gv)"/>
</g>
<path d="M0,3H148C200,13 250,25 300,25C330,25 350,19 372,20C398,22 415,40 440,50C448,53 455,54 465,54L465,64H0Z" fill="#f2f2f2"/>
<rect x="0" y="0" width="1918" height="3" fill="#f4f4f6"/>
<defs><linearGradient id="rl" gradientUnits="userSpaceOnUse" x1="180" y1="0" x2="320" y2="0"><stop offset="0" stop-color="#f06a7a" stop-opacity="0"/><stop offset="1" stop-color="#f06a7a"/></linearGradient></defs>
<rect x="180" y="57.5" width="1062" height="4" fill="url(#rl)" opacity=".25"/>
<rect x="180" y="58.7" width="1062" height="1.6" fill="url(#rl)"/>
<path d="M733,54C745,58 760,62 780,61C790,60 796,57 800,54Z" fill="#62b834" fill-opacity=".3"/>
<path d="M985,54C1010,62 1040,63 1075,56L1090,54Z" fill="#8a5a80" fill-opacity=".5"/>
<path d="M1195,54C1205,60 1220,61 1235,54Z" fill="#ef5aa0" fill-opacity=".7"/>
<circle cx="344.6" cy="34.4" r="8" fill="#c2c2c2"/></svg>
<svg style="position:absolute;left:0;top:0" width="300" height="64" viewBox="0 0 300 64">
<defs><clipPath id="lc"><circle cx="42.3" cy="29.6" r="19.8"/></clipPath></defs>
<circle cx="42.3" cy="29.6" r="19.8" fill="#ee3a62"/>
<g clip-path="url(#lc)"><path d="M42,14L66,30L52,56L30,50L42,25Z" fill="#e8183f"/><path d="M22,36L40,56L20,56Z" fill="#f04a6e" opacity=".6"/></g>
<path d="M34.6,37.6L42,17.2L49.8,38" fill="none" stroke="#fff" stroke-width="4" stroke-linecap="round" stroke-linejoin="round"/>
<path d="M252,32C247.500,32 245.700,28.500 245.700,25.500C245.700,21.500 249,18.500 253.200,18.800C254.800,15.500 258.500,13.800 262,15C263.800,11 267,9 270.500,9C275.500,9 279,13 278.600,18.600C281,19.800 282.200,22.500 282.200,25C282.200,29 279.500,32 276,32Z" fill="#fff" stroke="#6e6e6e" stroke-width="1.7" stroke-linejoin="round"/>
</svg>

<div id="logo-text">accurate</div>
<div id="online">online</div>
<div id="ver">v1.0.1#3530-1880003</div>
<div id="company">CV Mitra Spesialis</div>
<div id="user">Zikra karnefa</div>
<svg style="position:absolute;left:1340px;top:0" width="578" height="64" viewBox="1340 0 578 64" fill="none" stroke="#fff" stroke-linecap="round" stroke-linejoin="round">
<rect x="1367.800" y="25" width="16.400" height="15.200" rx="3.800" stroke-width="2.600"/>
<path d="M1371.400,20.600V23.500M1376,20.600V23.500M1380.600,20.600V23.500M1371.400,41.700V44.600M1376,41.700V44.600M1380.600,41.700V44.600M1363.700,28.200H1366.400M1363.700,32.600H1366.400M1363.700,37H1366.400M1385.600,28.200H1388.300M1385.600,32.600H1388.300M1385.600,37H1388.300" stroke-width="2" stroke-linecap="butt"/>
<text x="1376" y="36.500" text-anchor="middle" font-family="Liberation Sans,sans-serif" font-weight="bold" font-size="10.800" fill="#fff" stroke="none">AI</text>
<circle cx="1440.300" cy="30.100" r="8.500" stroke-width="3"/><path d="M1446.800,36.600L1453,42.800" stroke-width="3"/>
<circle cx="1509.700" cy="30.400" r="10.200" stroke-width="2.300"/>
<text x="1509.700" y="35.700" text-anchor="middle" font-family="Liberation Sans,sans-serif" font-weight="bold" font-size="15" fill="#fff" stroke="none">?</text>
<path d="M1561,51.300H1580C1577.500,48.500 1577.200,45.500 1577.200,42.500C1577.200,38.500 1574.500,35.500 1570.500,35.500C1566.500,35.500 1563.800,38.500 1563.800,42.500C1563.800,45.500 1563.500,48.500 1561,51.300Z" stroke-width="2.200"/>
<path d="M1568,54.600C1569,56.200 1572,56.200 1573,54.600" stroke-width="2.200"/>
<rect x="1564.800" y="9.900" width="45.200" height="23" rx="11.500" fill="#ff6d00" stroke="none"/>
<text x="1587" y="27.200" text-anchor="middle" font-family="Liberation Sans,sans-serif" font-weight="bold" font-size="16.500" fill="#fff" stroke="none">2</text>
<circle cx="1869.500" cy="32" r="24" fill="#ececec" stroke="none"/>
<circle cx="1870" cy="24.500" r="6.800" fill="#d9d9d9" stroke="none"/>
<path d="M1858.800,45.500V38.500C1858.800,34.500 1862,32 1865,32H1875C1878,32 1881.200,34.500 1881.200,38.500V45.500C1881.200,46.500 1880.500,47 1879.500,47H1860.500C1859.500,47 1858.800,46.500 1858.800,45.500Z" fill="#d9d9d9" stroke="none"/>
<path d="M1900.400,29.200L1905.200,34L1910,29.200" stroke-width="2.100" stroke-linecap="butt" stroke-linejoin="miter"/>
</svg>

</div>
<div id="side"><svg style="position:absolute;left:0;top:0;width:74px;height:813px" viewBox="0 64 74 813" fill="none" stroke="#fff" stroke-width="2.500" stroke-linecap="round" stroke-linejoin="round">
<g transform="translate(17.840,105.740) scale(1.630)" stroke-width="1.500"><path d="M9.594 3.940c.09-.542.560-.940 1.110-.940h2.593c.550 0 1.020.398 1.110.940l.213 1.281c.063.374.313.686.645.870.074.040.147.083.220.127.325.196.720.257 1.075.124l1.217-.456a1.125 1.125 0 0 1 1.370.490l1.296 2.247a1.125 1.125 0 0 1-.260 1.431l-1.003.827c-.293.241-.438.613-.430.992a7.723 7.723 0 0 1 0 .255c-.008.378.137.750.430.991l1.004.827c.424.350.534.955.260 1.430l-1.298 2.247a1.125 1.125 0 0 1-1.369.491l-1.217-.456c-.355-.133-.750-.072-1.076.124a6.470 6.470 0 0 1-.220.128c-.331.183-.581.495-.644.869l-.213 1.281c-.09.543-.560.940-1.110.940h-2.594c-.550 0-1.019-.398-1.110-.940l-.213-1.281c-.062-.374-.312-.686-.644-.870a6.520 6.520 0 0 1-.220-.127c-.325-.196-.720-.257-1.076-.124l-1.217.456a1.125 1.125 0 0 1-1.369-.490l-1.297-2.247a1.125 1.125 0 0 1 .260-1.431l1.004-.827c.292-.240.437-.613.430-.991a6.932 6.932 0 0 1 0-.255c.007-.380-.138-.751-.430-.992l-1.004-.827a1.125 1.125 0 0 1-.260-1.430l1.297-2.247a1.125 1.125 0 0 1 1.370-.491l1.216.456c.356.133.751.072 1.076-.124.072-.044.146-.086.220-.128.332-.183.582-.495.644-.869l.214-1.280Z"/><circle cx="12" cy="12" r="2.700"/></g>
<!-- cash register -->
<path d="M32.200,183V171.600H42.800V183M29,183.200H46L52,196H23ZM21.400,196.200H54V203.200H21.400ZM33.500,196.500V199.300H41.800V196.500"/>
<path d="M33.500,187.200h.1M37.500,187.200h.1M41.500,187.200h.1M33.500,191.600h.1M37.500,191.600h.1M41.500,191.600h.1" stroke-width="2.300" stroke-linecap="square"/>
<!-- building -->
<path d="M19.800,266H54.400M22.600,265.500V242.500L43,232.800V265.500M43.400,244.300H53V265.500" />
<path d="M28.500,245.600H36.500M28.500,250.700H36.500M28.500,255.800H36.500M28.500,261H36.500M46,249H49.500M46,253.700H49.500M46,258.400H49.500"/>
<!-- book -->
<path d="M50,295.300H29C26.200,295.300 24.800,297 24.800,299.500V323.500C24.800,326 26.500,327.400 29,327.400H50ZM30.600,295.500V321.500M25,323.300C25.500,321.300 27,320.700 29,320.700H49.500M34.400,300.600H46.200V306.200H34.400ZM33.800,324.600H42"/>
<!-- bank -->
<path d="M21,367.600L38,357.200L55,367.600V369.800H21ZM25.200,370.500V383M28.600,370.500V383M21.300,384.200H29V389.600H21.300ZM31.800,370.500V377.500M47,370.500V374M50.200,370.500V374"/>
<circle cx="37.900" cy="363.600" r="1.500"/>
<path d="M38,377V376.200C38,375.300 38.600,374.800 39.500,374.800H52C53,374.800 53.600,375.400 53.600,376.300V383.500C53.600,384.300 53,384.800 52.200,384.800"/>
<rect x="34.800" y="378.200" width="16.200" height="11.600" rx="1.500"/>
<path d="M35,382.300H50.800M42,386.800H46.500"/>
<!-- Rp tag -->
<path d="M35,422.600H47.500L50.400,426V448.500C50.400,450 49.500,450.800 48,450.800H34C32.500,450.800 31.600,450 31.600,448.500V426Z"/>
<path d="M33.500,423.500L22.400,443.500C21.800,444.800 22.200,445.800 23.400,446.400L31.400,450.200"/>
<path d="M40.800,425C40.500,421 44.500,418.500 46.300,418.500" stroke-width="1.800"/>
<circle cx="40.800" cy="425.400" r=".9" stroke-width="1.600"/>
<text x="40.700" y="440.700" text-anchor="middle" font-family="Liberation Sans,sans-serif" font-weight="bold" font-size="8.800" fill="#fff" stroke="none">Rp</text>
<!-- cart -->
<path d="M19.600,480H23.600L25.500,487.200H54.200L52.200,504.800H29.600L25.500,487.200M29.600,504.800L28.600,508.800H52"/>
<path d="M36,487.500V504.500M44.800,487.500V504.500M27.600,495.600H53.200" stroke-width="2"/>
<circle cx="33.300" cy="511.900" r="2.400"/><circle cx="46.700" cy="511.900" r="2.400"/>
<!-- trolley -->
<path d="M19.600,542.800H25C27,542.800 28,543.800 28,545.800V566.800H54.300V570.400H28V566.800"/>
<path d="M36.200,553.400V545H48.800V553.400M32.800,566.500V553.600H51.600V566.500M40.400,545.200V548.200H44.600V545.200M40,553.800V557.600H44.600V553.800"/>
<circle cx="33.400" cy="573.600" r="2.300"/><circle cx="48.400" cy="573.600" r="2.300"/>
<!-- building car -->
<path d="M18.500,637H55.400M22.400,636.500V617.500C22.400,615 24,613.600 26.500,613.600H36.500V622M41,623V608.600H52.400V636.500"/>
<path d="M26,620H32M26,624.800H30M45.800,614H49.200M45.800,618.800H49.200M45.800,623.600H49.200" stroke-width="1.900"/>
<path d="M29,633.800C28,633.800 27.800,633 28,632L28.600,629.500C28.900,628.500 29.500,628.400 30.400,628.200L32.600,627.800L34.600,625.600C35,625.200 35.500,625 36.200,625H41.500C42.200,625 42.700,625.200 43.100,625.700L45,628L46.800,628.400C47.800,628.600 48.200,629.200 48.200,630.200V632.600C48.200,633.400 47.800,633.800 47,633.800" stroke-width="1.900"/>
<circle cx="33.400" cy="634" r="2" fill="#1f3570" stroke-width="1.700"/><circle cx="43.600" cy="634" r="2" fill="#1f3570" stroke-width="1.700"/><path d="M35.800,634.200H41.200" stroke-width="1.800"/>
<!-- tax -->
<path d="M37,700.400H24C22,700.400 20.800,699.200 20.800,697.200V671.500L24,668.500H42.500C44.800,668.500 46,669.900 46,672.100V680.400"/>
<text x="33.600" y="679.200" text-anchor="middle" font-family="Liberation Sans,sans-serif" font-weight="bold" font-size="7.800" fill="#fff" stroke="#fff" stroke-width=".35">TAX</text>
<path d="M24.600,683.900H34.400M24.600,688.900H34.400M24.600,693.900H34.400" stroke-width="2.100"/>
<rect x="38.200" y="682.800" width="15.400" height="18" rx="2.800"/>
<path d="M42,687.800H50" stroke-width="2"/><path d="M42.200,692.400H45.200M47.200,692.400H50.200M42.200,696.300H45.200M47.200,696.300H50.200" stroke-width="2.100" stroke-linecap="butt"/>
<!-- report -->
<path d="M29,730.600H49C51,730.600 52,731.800 52,733.600V759.800C52,761.600 51,762.800 49,762.800H26.600C24.800,762.800 23.700,761.600 23.700,759.800V736Z"/>
<path d="M35.200,740.600A6,6 0 1 0 41.600,746.900H35.200Z" stroke-width="2"/><path d="M38.300,737.600A7,7 0 0 1 45.300,744.200H38.300Z" fill="#fff" stroke-width="1"/>
<path d="M30.800,758.600H44.600" stroke-width="2"/>
</svg>
</div>
<div id="tabs">
<div class="tab" style="left:7px;width:137px"><span style="left:14.300px;letter-spacing:-.1px">Dashboard</span></div>
<div class="tab" style="left:151px;width:296px"><span style="left:14.600px;letter-spacing:-.4px">Persiapan Data Perusahaan</span></div>
<div class="tab" style="left:454px;width:233px"><span style="left:14.600px;letter-spacing:-.33px">Faktur Penjualan</span><svg class="x" style="left:203.2px;top:14.6px;width:14px;height:14px" viewBox="0 0 14 14"><path d="M1.200,1.200L12.800,12.800M12.800,1.200L1.200,12.800" stroke="#3d3d3d" stroke-width="3.900" stroke-linecap="butt" fill="none"/></svg></div>
<div class="tab" style="left:695px;width:226px"><span style="left:14.600px;letter-spacing:-.36px">Retur Penjualan</span><svg class="x" style="left:195.5px;top:14.599999999999994px;width:14px;height:14px" viewBox="0 0 14 14"><path d="M1.200,1.200L12.800,12.800M12.800,1.200L1.200,12.800" stroke="#3d3d3d" stroke-width="3.900" stroke-linecap="butt" fill="none"/></svg></div>
<div class="tab act" style="left:928px;width:224px"><span style="left:14.600px;letter-spacing:-.38px">Daftar Laporan</span><svg class="x" style="left:193.5px;top:15px;width:14px;height:14px" viewBox="0 0 14 14"><path d="M1.200,1.200L12.800,12.800M12.800,1.200L1.200,12.800" stroke="#fff" stroke-width="3.900" stroke-linecap="butt" fill="none"/></svg></div>
</div>
<div id="tabcount"><span style="position:absolute;left:18.500px">5</span><svg style="position:absolute;left:35.500px;top:18px" width="13" height="9" viewBox="0 0 13 9"><path d="M1.500,1.500L6.500,6.500L11.500,1.500" fill="none" stroke="#555" stroke-width="1.700"/></svg></div>
<div id="row2"></div>
<div id="gbtn"><svg style="position:absolute;left:0;top:0" width="76" height="55" viewBox="77.400 111 76 55" fill="none" stroke="#fdffec"><path d="M112.600,130.400H128.100M112.600,139.400H128.100M112.600,148.400H128.100" stroke-width="3"/><path d="M104.400,128.100h4.600v4.600h-4.600ZM104.400,137.100h4.600v4.600h-4.600ZM104.400,146.100h4.600v4.600h-4.600Z" stroke-width="2" stroke-linejoin="round"/></svg></div>
<div id="rtab"><span>Rincian Nilai Pers…</span><svg class="x" style="left:229.2px;top:21.80000000000001px;width:13px;height:13px" viewBox="0 0 14 14"><path d="M1.200,1.200L12.800,12.800M12.800,1.200L1.200,12.800" stroke="#1a1a1a" stroke-width="3.900" stroke-linecap="butt" fill="none"/></svg></div>
<div id="tool"><div style="position:absolute;left:675px;top:10px;width:52px;height:36px;border:1px dotted #222"></div>
<svg style="position:absolute;left:0;top:0;width:1841px;height:56px" viewBox="77 166 1841 56" fill="none" stroke="#141414" stroke-width="2" stroke-linecap="round" stroke-linejoin="round">
<path d="M767.100,185.200V190.400M767.100,195.800V201.400M775.500,190.200V201.400M783.400,185.200V192.300M783.400,197.900V201.400" stroke-width="1.900"/>
<circle cx="767.100" cy="193.100" r="2.500" stroke-width="1.700"/><circle cx="775.500" cy="187.500" r="2.500" stroke-width="1.700"/><circle cx="783.400" cy="195.100" r="2.500" stroke-width="1.700"/>
<!-- edit -->
<path d="M829,186.500H822.800C821.500,186.500 820.800,187.300 820.800,188.500V200.300C820.800,201.500 821.500,202.200 822.800,202.200H835.500C836.800,202.200 837.500,201.500 837.500,200.300V193.800"/>
<path d="M826,196.800L826.800,193.300L836.600,183.600C837.300,182.900 838.300,182.900 839,183.600L839.800,184.400C840.500,185.100 840.500,186.100 839.800,186.800L830,196.200Z" stroke-width="1.800"/>
<!-- refresh -->
<path d="M876.200,190.500C877.500,186.800 880.800,184.900 884.200,184.900C887.800,184.900 890.800,187.200 892,190.500M891.900,195.800C890.600,199.400 887.500,201.300 884.100,201.300C880.600,201.300 877.500,199.200 876.200,195.800"/>
<path d="M890.400,191.600H894.600V187.600ZM877.800,194.600H873.600V198.600Z" fill="#141414" stroke-width="1"/>
<!-- printer -->
<path d="M932.600,189V185C932.600,183.800 933.400,183.200 934.500,183.200H943.600C944.800,183.200 945.500,183.800 945.500,185V189M932.400,198.200H931.400C930,198.200 929.200,197.400 929.200,196V191.800C929.200,190 930.300,189 932,189H946C947.800,189 948.900,190 948.900,191.800V196C948.900,197.400 948,198.200 946.700,198.200H945.800M932.400,195.200H945.800V201C945.800,202.200 945,202.800 943.900,202.800H934.300C933.100,202.800 932.400,202.200 932.400,201Z"/>
<path d="M936.800,199H941.400" stroke-width="1.800"/><path d="M932.200,192H932.800" stroke-width="1.800"/>
<!-- save -->
<path d="M986,184.200H999L1003.400,188.600V200.800C1003.400,202 1002.600,202.800 1001.400,202.800H986C984.800,202.800 984.200,202 984.200,200.800V186C984.200,184.800 984.800,184.200 986,184.200Z"/>
<path d="M987.400,184.400V188.600H997.600M987.400,202.600V194.600H1000.400V202.600" stroke-width="1.900"/>
<!-- heart -->
<path d="M1048.600,202.400C1043,198.200 1038.800,194.800 1038.800,190.800C1038.800,188 1041,186.200 1043.400,186.200C1045.600,186.200 1047.600,187.400 1048.600,189.600C1049.600,187.400 1051.600,186.200 1053.800,186.200C1056.200,186.200 1058.400,188 1058.400,190.800C1058.400,194.800 1054.200,198.200 1048.600,202.400Z"/>
<!-- share -->
<path d="M1092.400,192.800V197.800C1092.400,199.200 1093.200,199.800 1094.400,199.800H1109.400C1110.600,199.800 1111.400,199.200 1111.400,197.800V192.800M1101.900,195V185M1097.500,189.200L1101.900,184.800L1106.300,189.200"/>
<path d="M1125.600,188L1130.900,193L1136.200,188" stroke-width="1.900"/>
<!-- plus / minus -->
<circle cx="1171.500" cy="193.400" r="9.200" stroke-width="1.800"/><path d="M1166.800,193.400H1176.200M1171.500,188.700V198.100" stroke-width="1.900"/>
<circle cx="1219.600" cy="193.400" r="9.200" stroke-width="1.800"/><path d="M1214.800,193.400H1224.400" stroke-width="1.900"/>
</svg>
</div>
<div id="view">
<div id="page"><div class="m" style="left:0;width:1421px;text-align:center;top:52.0px;font-size:18.2px;line-height:20px;letter-spacing:1.15px;margin-left:-0.1px">PT. Mitra Spesialis</div>
<div class="ttl" style="left:0;width:1421px;text-align:center;top:81.1px;margin-left:-0.2px">Rincian Nilai Persediaan</div>
<div class="m" style="left:0;width:1421px;text-align:center;top:120.0px;font-size:17.2px;line-height:20px;letter-spacing:0.81px;margin-left:1.0px">Dari 01 Des 2025 s/d 31 Des 2025</div>
<div class="it" style="right:45.5px;top:145.1px;">Barang : Tumbler</div>
<div class="b" style="left:62.4px;top:200.9px;">Kode Barang</div>
<div class="b" style="left:210.2px;top:200.9px;">:</div>
<div class="b" style="left:242.3px;top:200.9px;">100048</div>
<div class="b" style="left:62.4px;top:223.9px;">Nama Barang</div>
<div class="b" style="left:210.2px;top:223.9px;">:</div>
<div class="b" style="left:243.5px;top:223.9px;">Tumbler</div>
<div class="h" style="left:94.6px;top:256.7px;">Nomor #</div>
<div class="h" style="left:311.4px;top:256.7px;">Tanggal</div>
<div class="h" style="right:892.2px;top:256.7px;">Kts</div>
<div class="h" style="right:892.2px;top:273.7px;">Masuk</div>
<div class="h" style="right:710.6px;top:256.7px;">Nilai Masuk</div>
<div class="h" style="right:596.8px;top:256.7px;">Kts</div>
<div class="h" style="right:596.8px;top:273.7px;">Keluar</div>
<div class="h" style="right:414.9px;top:256.7px;">Nilai Keluar</div>
<div class="h" style="right:277.0px;top:256.7px;">Kts Akhir</div>
<div class="h" style="right:109.6px;top:256.7px;">Nilai Akhir</div>
<div class="ln" style="left:86.2px;top:292.0px;width:202.7px"></div>
<div class="ln" style="left:302.0px;top:292.0px;width:121.8px"></div>
<div class="ln" style="left:437.3px;top:292.0px;width:100.3px"></div>
<div class="ln" style="left:551.2px;top:292.0px;width:167.8px"></div>
<div class="ln" style="left:731.8px;top:292.0px;width:100.6px"></div>
<div class="ln" style="left:846.2px;top:292.0px;width:167.5px"></div>
<div class="ln" style="left:1027.6px;top:292.0px;width:124.9px"></div>
<div class="ln" style="left:1165.0px;top:292.0px;width:155.0px"></div>
<div class="d" style="left:310.2px;top:305.6px;">30 Nov 2025</div>
<div class="d" style="right:892.2px;top:305.6px;">0</div>
<div class="d" style="right:710.6px;top:305.6px;">0</div>
<div class="d" style="right:596.8px;top:305.6px;">0</div>
<div class="d" style="right:414.9px;top:305.6px;">0</div>
<div class="d" style="right:277.0px;top:305.6px;">0</div>
<div class="d" style="right:109.6px;top:305.6px;">0</div>
<div class="d" style="left:94.8px;top:329.1px;">PI.2025.12.00005</div>
<div class="d" style="left:310.2px;top:329.1px;">01 Des 2025</div>
<div class="d" style="right:892.2px;top:329.1px;">100</div>
<div class="d" style="right:710.6px;top:329.1px;">5.000.000</div>
<div class="d" style="right:596.8px;top:329.1px;">0</div>
<div class="d" style="right:414.9px;top:329.1px;">0</div>
<div class="d" style="right:277.0px;top:329.1px;">100</div>
<div class="d" style="right:109.6px;top:329.1px;">5.000.000</div>
<div class="d" style="left:94.8px;top:352.8px;">SI.2025.12.00009</div>
<div class="d" style="left:310.2px;top:352.8px;">03 Des 2025</div>
<div class="d" style="right:892.2px;top:352.8px;">0</div>
<div class="d" style="right:710.6px;top:352.8px;">0</div>
<div class="d" style="right:596.8px;top:352.8px;">50</div>
<div class="d" style="right:414.9px;top:352.8px;">2.500.000</div>
<div class="d" style="right:277.0px;top:352.8px;">50</div>
<div class="d" style="right:109.6px;top:352.8px;">2.500.000</div>
<div class="d" style="left:94.8px;top:376.9px;">SI.2025.12.00010</div>
<div class="d" style="left:310.2px;top:376.9px;">10 Des 2025</div>
<div class="d" style="right:892.2px;top:376.9px;">0</div>
<div class="d" style="right:710.6px;top:376.9px;">0</div>
<div class="d" style="right:596.8px;top:376.9px;">25</div>
<div class="d" style="right:414.9px;top:376.9px;">1.250.000</div>
<div class="d" style="right:277.0px;top:376.9px;">25</div>
<div class="d" style="right:109.6px;top:376.9px;">1.250.000</div>
<div class="d" style="left:94.8px;top:400.7px;">SI.2025.12.00011</div>
<div class="d" style="left:310.2px;top:400.7px;">15 Des 2025</div>
<div class="d" style="right:892.2px;top:400.7px;">0</div>
<div class="d" style="right:710.6px;top:400.7px;">0</div>
<div class="d" style="right:596.8px;top:400.7px;">20</div>
<div class="d" style="right:414.9px;top:400.7px;">1.000.000</div>
<div class="d" style="right:277.0px;top:400.7px;">5</div>
<div class="d" style="right:109.6px;top:400.7px;">250.000</div>
<div class="ln" style="left:731.8px;top:489.5px;width:100.6px"></div>
<div class="ln" style="left:846.2px;top:489.5px;width:167.5px"></div>
<div class="rb" style="left:85px;top:415px;width:639.2px;height:31px"></div>
<div class="d" style="left:94.8px;top:423.5px;">PI.2025.12.00007</div>
<div class="d" style="left:310.2px;top:423.5px;">17 Des 2025</div>
<div class="d" style="right:892.2px;top:423.5px;">1</div>
<div class="d" style="right:710.6px;top:423.5px;">75.000</div>
<div class="d" style="right:596.8px;top:423.5px;">0</div>
<div class="d" style="right:414.9px;top:423.5px;">0</div>
<div class="d" style="right:277.0px;top:423.5px;">6</div>
<div class="d" style="right:109.6px;top:423.5px;">325.000</div>
<div class="d" style="left:94.8px;top:446.5px;">SI.2025.12.00012</div>
<div class="d" style="left:310.2px;top:446.5px;">19 Des 2025</div>
<div class="d" style="right:892.2px;top:446.5px;">0</div>
<div class="d" style="right:710.6px;top:446.5px;">0</div>
<div class="d" style="right:596.8px;top:446.5px;">1</div>
<div class="d" style="right:414.9px;top:446.5px;">50.000</div>
<div class="d" style="right:277.0px;top:446.5px;">5</div>
<div class="d" style="right:109.6px;top:446.5px;">275.000</div>
<div class="rb" style="left:82px;top:460.4px;width:642.2px;height:35.4px"></div>
<div class="d" style="left:94.8px;top:470.5px;">SRT.2025.12.00003</div>
<div class="d" style="left:310.2px;top:470.5px;">22 Des 2025</div>
<div class="d" style="right:892.2px;top:470.5px;">1</div>
<div class="d" style="right:710.6px;top:470.5px;">75.000</div>
<div class="d" style="right:596.8px;top:470.5px;">0</div>
<div class="d" style="right:414.9px;top:470.5px;">0</div>
<div class="d" style="right:277.0px;top:470.5px;">6</div>
<div class="d" style="right:109.6px;top:470.5px;">350.000</div>
<div class="h" style="right:892.2px;top:495.8px;">102</div>
<div class="h" style="right:710.6px;top:495.8px;">5.150.000</div>
<div class="h" style="right:596.8px;top:495.8px;">96</div>
<div class="h" style="right:414.9px;top:495.8px;">4.800.000</div></div>
</div>
<div id="sb"><svg width="30" height="650" viewBox="1888 222 30 650"><path d="M1902.700,231L1910.800,241.600H1894.600Z" fill="#8b8b8b" stroke="#8b8b8b" stroke-width="2" stroke-linejoin="round"/><rect x="1894.700" y="255.700" width="16" height="366.100" rx="8" fill="#8b8b8b"/><path d="M1902.700,862.600L1910.800,851.600H1894.600Z" fill="#8b8b8b" stroke="#8b8b8b" stroke-width="2" stroke-linejoin="round"/></svg></div>
<div id="bot"></div>
<div id="gap"></div>
</body>
</html>
